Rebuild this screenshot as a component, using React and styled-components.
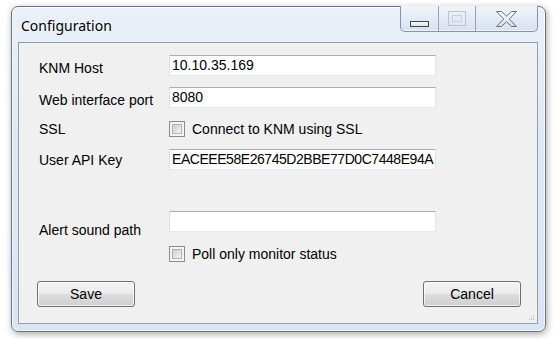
import React from "react";
import styled, { createGlobalStyle } from "styled-components";

const Global = createGlobalStyle`
  * { box-sizing: border-box; }
  html, body { margin: 0; padding: 0; background: #ffffff; }
  body { font-family: "Liberation Sans", Arial, sans-serif; }
`;

const Stage = styled.div`
  width: 559px;
  height: 339px;
  padding: 6px 0 0 11px;
  overflow: hidden;
`;

const Window = styled.div`
  width: 535px;
  height: 326px;
  display: flex;
  flex-direction: column;
  border: 1px solid #64748a;
  border-radius: 7px 7px 7px 7px;
  background: linear-gradient(180deg, #e9f0f9 0%, #dfe9f5 40%, #d8e5f4 100%);
  box-shadow: 1px 2px 7px rgba(0, 0, 0, 0.35), inset 0 0 0 1px rgba(255, 255, 255, 0.7);
  padding: 0 7px 7px 6px;
`;

const TitleBar = styled.div`
  height: 35px;
  display: flex;
  align-items: flex-start;
  padding-left: 3px;
`;

const Title = styled.div`
  align-self: center;
  margin-top: 1px;
  font-family: "Noto Sans", "Open Sans", sans-serif;
  font-size: 14px;
  color: #000;
  text-shadow: 0 0 6px rgba(255, 255, 255, 0.9);
`;

const CaptionGroup = styled.div`
  margin-left: auto;
  margin-top: -1px;
  display: flex;
  height: 26px;
  border: 1px solid #8593a6;
  border-top: none;
  border-radius: 0 0 5px 5px;
  overflow: hidden;
  background: linear-gradient(180deg, #f1f5fa 0%, #e4ebf5 50%, #d8e2ef 100%);
  box-shadow: inset 0 -1px 0 rgba(255, 255, 255, 0.6);
`;

const CaptionButton = styled.div`
  width: ${(p) => p.$w}px;
  height: 100%;
  display: flex;
  align-items: center;
  justify-content: center;
  padding-top: ${(p) => p.$pt || 0}px;
  & + & { border-left: 1px solid #95a3b5; }
`;

const Client = styled.div`
  flex: 1;
  position: relative;
  display: flex;
  flex-direction: column;
  background: #f0f0f0;
  border: 1px solid #929fb0;
`;

const Form = styled.div`
  display: flex;
  flex-direction: column;
  padding-left: 20px;
`;

const Row = styled.div`
  display: grid;
  grid-template-columns: 130px 267px;
  height: 21px;
  margin-top: ${(p) => p.$mt}px;
`;

const Label = styled.div`
  font-size: 14px;
  line-height: 21px;
  color: #000;
  white-space: nowrap;
  margin-top: ${(p) => p.$dy || 0}px;
`;

const TextBox = styled.div`
  height: 21px;
  background: #fff;
  border: 1px solid #e2e3ea;
  border-top-color: #abadb3;
  border-left-color: #dbdfe6;
  border-bottom-color: #e3e9ef;
  padding: 0 2px;
  font-size: 14px;
  line-height: 19px;
  letter-spacing: ${(p) => (p.$tight ? "-0.45px" : "0")};
  color: #000;
  white-space: nowrap;
  overflow: hidden;
`;

const CheckRow = styled.div`
  display: flex;
  align-items: center;
  gap: 7px;
  font-size: 14px;
  color: #000;
  white-space: nowrap;
`;

const CheckBox = styled.span`
  width: 16px;
  height: 16px;
  border: 1px solid #8a8b8c;
  background: #f4f4f4;
  padding: 2px;
  display: inline-flex;
  &::after {
    content: "";
    flex: 1;
    border: 1px solid #adb1b8;
    background: linear-gradient(135deg, #c9cdd3 0%, #dfe1e5 50%, #f6f6f6 100%);
  }
`;

const Footer = styled.div`
  margin-top: auto;
  display: flex;
  justify-content: space-between;
  padding: 0 16px 16px 18px;
`;

const Button = styled.div`
  width: 98px;
  height: 26px;
  display: flex;
  align-items: center;
  justify-content: center;
  border: 1px solid #707070;
  border-radius: 3px;
  background: linear-gradient(180deg, #f2f2f2 0%, #ebebeb 49%, #dddddd 51%, #cfcfcf 100%);
  box-shadow: inset 0 0 0 1px rgba(255, 255, 255, 0.75);
  font-size: 14px;
  color: #000;
`;

const Grip = styled.svg`
  position: absolute;
  right: 2px;
  bottom: 2px;
`;

const MinIcon = () => (
  <svg width="19" height="6" viewBox="0 0 19 6">
    <defs>
      <linearGradient id="mg" x1="0" y1="0" x2="0" y2="1">
        <stop offset="0" stopColor="#ffffff" />
        <stop offset="1" stopColor="#dcdcdc" />
      </linearGradient>
    </defs>
    <rect x="0.5" y="0.5" width="18" height="5" fill="url(#mg)" stroke="#3f464f" />
  </svg>
);

const MaxIcon = () => (
  <svg width="18" height="15" viewBox="0 0 18 15">
    <rect x="0.5" y="0.5" width="17" height="14" fill="none" stroke="#bcc6d2" />
    <rect x="4.5" y="4.5" width="9" height="6" fill="none" stroke="#c6ced8" />
  </svg>
);

const CloseIcon = () => (
  <svg width="21" height="16" viewBox="0 0 21 16">
    <defs>
      <linearGradient id="cg" x1="0" y1="0" x2="0" y2="1">
        <stop offset="0" stopColor="#ffffff" />
        <stop offset="1" stopColor="#d4dae2" />
      </linearGradient>
    </defs>
    <polygon
      points="0.5,0.5 5.5,0.5 10.5,5.2 15.5,0.5 20.5,0.5 13.3,8 20.5,15.5 15.5,15.5 10.5,10.8 5.5,15.5 0.5,15.5 7.7,8"
      fill="url(#cg)"
      stroke="#66717f"
      strokeLinejoin="round"
    />
  </svg>
);

const Check = ({ children }) => (
  <CheckRow>
    <CheckBox />
    {children}
  </CheckRow>
);

export default function App() {
  return (
    <Stage>
      <Global />
      <Window>
        <TitleBar>
          <Title>Configuration</Title>
          <CaptionGroup>
            <CaptionButton $w={37} $pt={10}>
              <MinIcon />
            </CaptionButton>
            <CaptionButton $w={37}>
              <MaxIcon />
            </CaptionButton>
            <CaptionButton $w={62}>
              <CloseIcon />
            </CaptionButton>
          </CaptionGroup>
        </TitleBar>
        <Client>
          <Form>
            <Row $mt={12}>
              <Label $dy={3}>KNM Host</Label>
              <TextBox>10.10.35.169</TextBox>
            </Row>
            <Row $mt={11}>
              <Label $dy={3}>Web interface port</Label>
              <TextBox>8080</TextBox>
            </Row>
            <Row $mt={10}>
              <Label $dy={1}>SSL</Label>
              <Check>Connect to KNM using SSL</Check>
            </Row>
            <Row $mt={10}>
              <Label $dy={1}>User API Key</Label>
              <TextBox $tight>EACEEE58E26745D2BBE77D0C7448E94A</TextBox>
            </Row>
            <Row $mt={41}>
              <Label $dy={9}>Alert sound path</Label>
              <TextBox />
            </Row>
            <Row $mt={11}>
              <span />
              <Check>Poll only monitor status</Check>
            </Row>
          </Form>
          <Footer>
            <Button>Save</Button>
            <Button>Cancel</Button>
          </Footer>
          <Grip width="6" height="6" viewBox="0 0 6 6">
            <rect x="4" y="0" width="1" height="1" fill="#b8b8b8" />
            <rect x="2" y="2" width="1" height="1" fill="#b8b8b8" />
            <rect x="4" y="2" width="1" height="1" fill="#b8b8b8" />
            <rect x="0" y="4" width="1" height="1" fill="#b8b8b8" />
            <rect x="2" y="4" width="1" height="1" fill="#b8b8b8" />
            <rect x="4" y="4" width="1" height="1" fill="#b8b8b8" />
          </Grip>
        </Client>
      </Window>
    </Stage>
  );
}
